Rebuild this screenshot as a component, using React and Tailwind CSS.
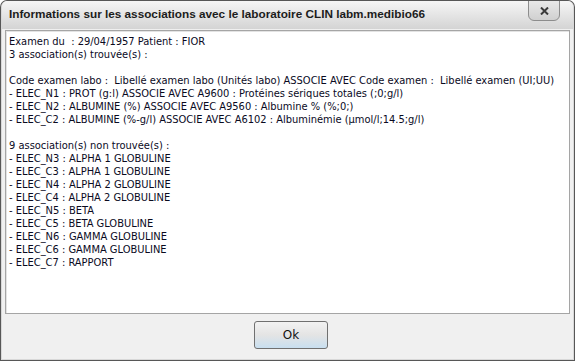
export default function App() {
  const lines = [
    "Examen du  : 29/04/1957 Patient : FIOR",
    "3 association(s) trouvée(s) :",
    "",
    "Code examen labo :  Libellé examen labo (Unités labo) ASSOCIE AVEC Code examen :  Libellé examen (UI;UU)",
    "- ELEC_N1 : PROT (g:l) ASSOCIE AVEC A9600 : Protéines sériques totales (;0;g/l)",
    "- ELEC_N2 : ALBUMINE (%) ASSOCIE AVEC A9560 : Albumine % (%;0;)",
    "- ELEC_C2 : ALBUMINE (%-g/l) ASSOCIE AVEC A6102 : Albuminémie (µmol/l;14.5;g/l)",
    "",
    "9 association(s) non trouvée(s) :",
    "- ELEC_N3 : ALPHA 1 GLOBULINE",
    "- ELEC_C3 : ALPHA 1 GLOBULINE",
    "- ELEC_N4 : ALPHA 2 GLOBULINE",
    "- ELEC_C4 : ALPHA 2 GLOBULINE",
    "- ELEC_N5 : BETA",
    "- ELEC_C5 : BETA GLOBULINE",
    "- ELEC_N6 : GAMMA GLOBULINE",
    "- ELEC_C6 : GAMMA GLOBULINE",
    "- ELEC_C7 : RAPPORT",
  ];
  return (
    <div className="w-[575px] h-[361px] bg-[#575757] rounded-t-[7px] p-px">
      <div className="w-full h-full flex flex-col rounded-t-[6px] bg-[#f0f0f0] border border-[#d8d8d8] border-t-0 overflow-hidden">
        <div className="relative h-[28px] shrink-0 bg-gradient-to-b from-[#f6f6f6] to-[#d4d4d4] flex items-center pl-[7px] pb-[3px]">
          <span className="text-[11.75px] font-bold text-[#1c1c1c]" style={{ fontFamily: '"Liberation Sans", Arial, sans-serif' }}>
            Informations sur les associations avec le laboratoire CLIN labm.medibio66
          </span>
          <div className="absolute top-[-1px] right-[13px] w-[32px] h-[21px] rounded-b-[6px] border border-[#8d8d8d] bg-gradient-to-b from-[#e8e8e8] to-[#d0d0d0] flex items-center justify-center">
            <svg width="9" height="8" viewBox="0 0 9 8">
              <path d="M1 0.5 L8 7.5 M8 0.5 L1 7.5" stroke="#3a3a3a" strokeWidth="2" />
            </svg>
          </div>
        </div>
        <div className="flex-1 flex flex-col px-[3px] pt-[1px]">
          <div className="h-[284px] border border-[#a5a5a5] bg-white shadow-[inset_1px_1px_0_#e3e3e3] pl-[3px] pt-[4px]">
            <div className="text-[11px] leading-[13px] text-[#0a0a1e] whitespace-pre" style={{ fontFamily: 'Tahoma, "DejaVu Sans Condensed", "Liberation Sans", sans-serif' }}>
              {lines.map((l, i) => (
                <div key={i} className="h-[13px]">{l}</div>
              ))}
            </div>
          </div>
          <div className="flex-1 flex items-center justify-center pb-[3px]">
            <button className="ml-[7px] w-[74px] h-[28px] rounded-[3px] border border-[#707070] bg-gradient-to-b from-[#f2f2f2] via-[#e4e4e4] to-[#c8dff0] text-[12px] text-[#111]" style={{ fontFamily: 'Tahoma, "DejaVu Sans", sans-serif' }}>
              Ok
            </button>
          </div>
        </div>
      </div>
    </div>
  );
}
